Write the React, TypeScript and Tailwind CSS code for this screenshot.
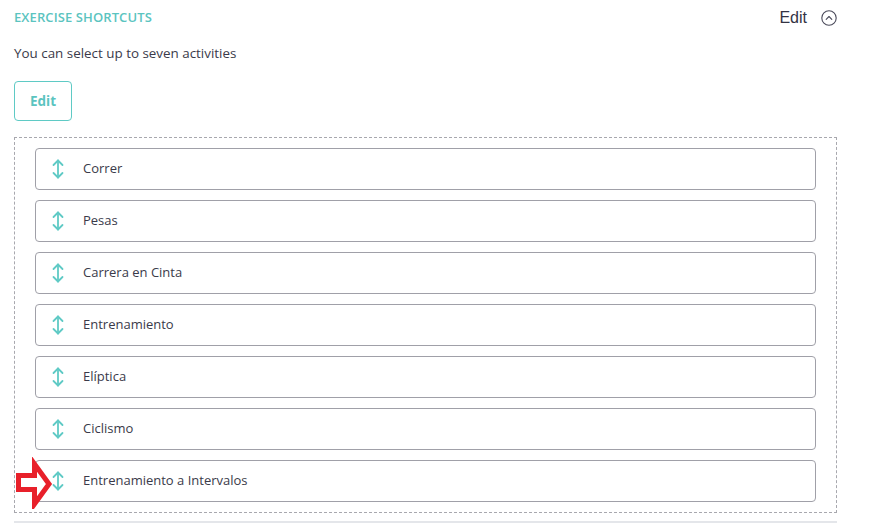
const activities = [
    'Correr',
    'Pesas',
    'Carrera en Cinta',
    'Entrenamiento',
    'Elíptica',
    'Ciclismo',
    'Entrenamiento a Intervalos',
];

function DragIcon() {
    return (
        <svg width="12" height="20" viewBox="0 0 12 20" fill="none" stroke="#5fcac5" strokeWidth="1.8" strokeLinecap="round" strokeLinejoin="round">
            <path d="M6 1.5v17" />
            <path d="M1.5 6 6 1.5 10.5 6" />
            <path d="M1.5 14 6 18.5 10.5 14" />
        </svg>
    );
}

function ChevronCircle() {
    return (
        <svg width="16" height="16" viewBox="0 0 16 16" fill="none" stroke="#4a4a5a" strokeWidth="1.1" strokeLinecap="round" strokeLinejoin="round">
            <circle cx="8" cy="8" r="7.2" />
            <path d="M5.2 9.3 8 6.5l2.8 2.8" />
        </svg>
    );
}

export default function App() {
    return (
        <div className="relative w-[869px] h-[524px] bg-white overflow-hidden font-['Open_Sans',sans-serif] text-[#3a3a4a]">
            <div className="w-[823px] ml-[14px]">
                {/* header */}
                <div className="flex items-center justify-between h-[20px] mt-[8px]">
                    <h3 className="text-[13px] font-semibold text-[#5bc4c0] tracking-[0.1px]">EXERCISE SHORTCUTS</h3>
                    <div className="flex items-center gap-[14px]">
                        <span className="font-['Liberation_Sans',sans-serif] text-[16px] text-[#333344]">Edit</span>
                        <ChevronCircle />
                    </div>
                </div>

                <p className="mt-[16px] text-[13.4px] leading-[18px] text-[#3a3a4a]">You can select up to seven activities</p>

                <button className="mt-[19px] w-[58px] h-[40px] border border-[#5fcac5] rounded-[4px] text-[13.5px] font-bold text-[#5bc4c0]">
                    Edit
                </button>

                {/* sortable list */}
                <div className="mt-[16px] h-[376px] border border-dashed border-[#a8a8ae] px-[20px] pt-[10px] flex flex-col gap-[10px]">
                    {activities.map((name) => (
                        <div key={name} className="h-[42px] border border-[#a0a0a8] rounded-[4px] flex items-center pl-[16px]">
                            <DragIcon />
                            <span className="ml-[19px] text-[13px] text-[#3a3a4a]">{name}</span>
                        </div>
                    ))}
                </div>

                <div className="mt-[8px] h-[2px] bg-[#e4e6ea]" />
            </div>

            {/* red annotation arrow */}
            <svg className="absolute left-[14px] top-[457px]" width="44" height="52" viewBox="0 0 44 52">
                <polygon points="4.5,18.5 20.5,18.5 20.5,7 35,27 20.5,47 20.5,32.5 4.5,32.5" fill="white" stroke="#e8202a" strokeWidth="5" strokeLinejoin="miter" strokeMiterlimit="10" />
            </svg>
        </div>
    );
}
